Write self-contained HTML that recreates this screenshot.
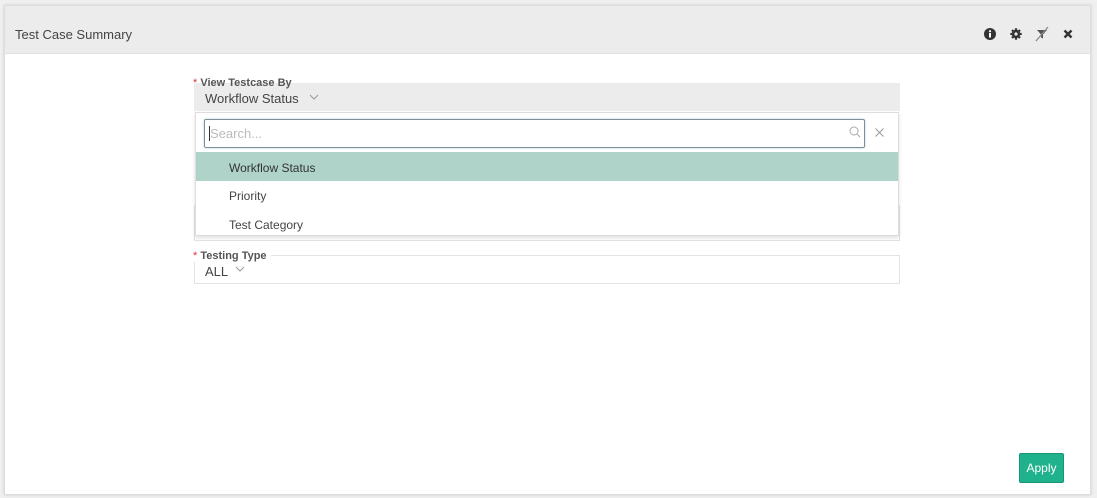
<!DOCTYPE html>
<html><head><meta charset="utf-8"><style>
*{box-sizing:border-box;margin:0;padding:0}
body{width:1097px;height:498px;background:#f0f0f0;font-family:"Liberation Sans",sans-serif;position:relative;overflow:hidden}
.panel{position:absolute;left:4px;top:5px;width:1087px;height:490px;background:#fff;border:1px solid #ddd;box-shadow:0 0 3px rgba(0,0,0,.15)}
.hdr{position:absolute;left:0;top:0;right:0;height:48px;background:#ececec;border-bottom:1px solid #e0e0e0}
.hdr .t{position:absolute;left:10px;top:21px;font-size:13px;color:#444}
.ic{position:absolute;top:22px}
.abs{position:absolute}
.lbl{position:absolute;font-size:11px;font-weight:bold;color:#555;background:#fff;padding-right:4px}
.lbl b{color:#d33;font-weight:normal}
</style></head><body>
<div class="panel">
 <div class="hdr"><div class="t">Test Case Summary</div>
  <svg class="ic" style="left:979px" width="12" height="12" viewBox="0 0 12 12"><circle cx="6" cy="6" r="6" fill="#333"/><rect x="5" y="5" width="2" height="4.5" fill="#fff"/><circle cx="6" cy="3.2" r="1.1" fill="#fff"/></svg>
  <svg class="ic" style="left:1005px" width="12" height="12" viewBox="0 0 12 12"><circle cx="6" cy="6" r="4.2" fill="#333"/><g stroke="#333" stroke-width="2.2"><line x1="6" y1="0.3" x2="6" y2="11.7"/><line x1="0.3" y1="6" x2="11.7" y2="6"/><line x1="2" y1="2" x2="10" y2="10"/><line x1="10" y1="2" x2="2" y2="10"/></g><circle cx="6" cy="6" r="1.6" fill="#ececec"/></svg>
  <svg class="ic" style="left:1029px;top:20px" width="16" height="16" viewBox="0 0 16 16"><path d="M3 4h10l-4 4.5v4l-2-1v-3z" fill="#555"/><line x1="2" y1="15" x2="14" y2="1" stroke="#888" stroke-width="1.3"/></svg>
  <svg class="ic" style="left:1058px;top:23px" width="10" height="10" viewBox="0 0 10 10"><path d="M1.5 1.5l7 7M8.5 1.5l-7 7" stroke="#333" stroke-width="2.4"/></svg>
 </div>
</div>
<div class="abs" style="left:194px;top:83px;width:706px;height:28px;background:#ececec"></div>
<div class="lbl" style="left:193px;top:77px;background:transparent"><b>*</b> View Testcase By</div>
<div class="abs" style="left:205px;top:91px;font-size:13px;color:#444">Workflow Status</div>
<svg class="abs" style="left:309px;top:94px" width="10" height="6" viewBox="0 0 10 6"><path d="M1 1l4 4 4-4" stroke="#999" fill="none"/></svg>
<div class="abs" style="left:194px;top:205px;width:706px;height:36px;border:1px solid #e3e3e3;border-top:none"></div>
<div class="abs" style="left:194px;top:255px;width:706px;height:29px;border:1px solid #e3e3e3"></div>
<div class="lbl" style="left:193px;top:250px"><b>*</b> Testing Type</div>
<div class="abs" style="left:205px;top:264px;font-size:13px;color:#444">ALL</div>
<svg class="abs" style="left:235px;top:266px" width="10" height="6" viewBox="0 0 10 6"><path d="M1 1l4 4 4-4" stroke="#999" fill="none"/></svg>
<div class="abs" style="left:195px;top:112px;width:704px;height:124px;background:#fff;border:1px solid #ddd;box-shadow:0 2px 4px rgba(0,0,0,.12)">
 <div class="abs" style="left:8px;top:6px;width:661px;height:29px;border:1px solid #7a909c;border-radius:2px;box-shadow:0 0 2px #b9c9d3"></div>
 <div class="abs" style="left:13px;top:13px;width:1px;height:15px;background:#333"></div>
 <div class="abs" style="left:14px;top:13px;font-size:13px;color:#bbb">Search...</div>
 <svg class="abs" style="left:653px;top:13px" width="12" height="12" viewBox="0 0 12 12"><circle cx="5" cy="5" r="4" stroke="#aaa" fill="none"/><path d="M8 8l3 3" stroke="#aaa"/></svg>
 <svg class="abs" style="left:679px;top:15px" width="9" height="9" viewBox="0 0 9 9"><path d="M.5.5l8 8M8.5.5l-8 8" stroke="#999"/></svg>
 <div class="abs" style="left:0;top:39px;width:702px;height:29px;background:#afd3c8"></div>
 <div class="abs" style="left:33px;top:48px;font-size:12px;color:#333">Workflow Status</div>
 <div class="abs" style="left:33px;top:76px;font-size:12px;color:#444">Priority</div>
 <div class="abs" style="left:33px;top:105px;font-size:12px;color:#444">Test Category</div>
</div>
<div class="abs" style="left:1019px;top:453px;width:45px;height:30px;background:#1fb28c;border:1px solid #149874;border-radius:2px;color:#fff;font-size:12px;text-align:center;line-height:28px">Apply</div>
</body></html>
